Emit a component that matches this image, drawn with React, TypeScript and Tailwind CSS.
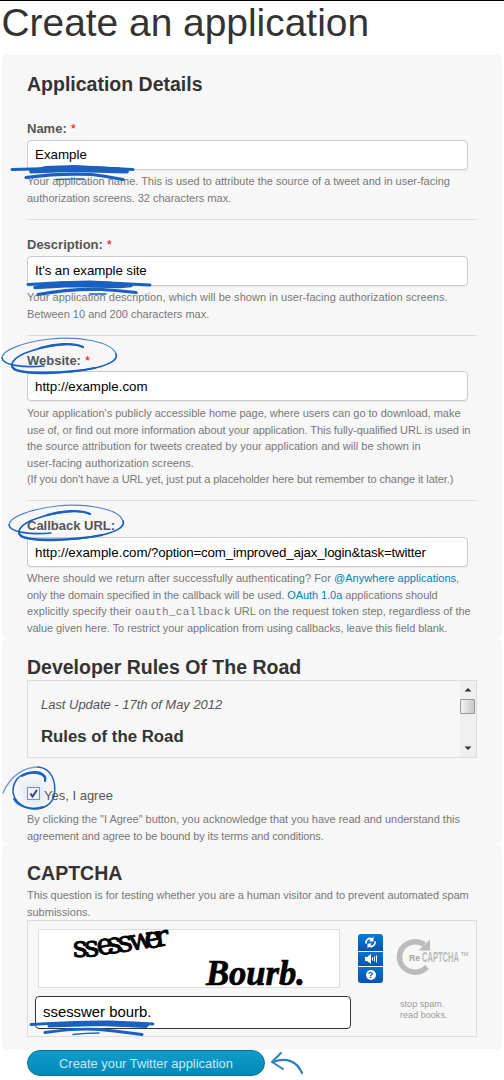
import React from "react";

const HELP = "text-[11px] leading-[16.5px] text-[#777] whitespace-nowrap";

function Line({ className = "", children }: { className?: string; children: React.ReactNode }) {
  return <div className={`h-[16.5px] ${className}`}>{children}</div>;
}

function Field({
  label,
  required,
  value,
  labelLeading = "leading-[20px]",
  valuePad = "pb-px",
  helpGap = "mt-[3px]",
  children,
}: {
  label: string;
  required?: boolean;
  value: React.ReactNode;
  labelLeading?: string;
  valuePad?: string;
  helpGap?: string;
  children: React.ReactNode;
}) {
  return (
    <div>
      <label className={`block h-[21px] text-[13px] font-bold ${labelLeading} text-[#555]`}>
        {label}
        {required && <span className="ml-1 font-normal text-[#f00]">*</span>}
      </label>
      <div
        className={`flex h-[30px] w-[441px] items-center rounded-[4px] border border-[#ccc] bg-white ${valuePad} pl-[7px] text-[13.33px] text-black shadow-[0_1px_1px_rgba(0,0,0,0.06)]`}
      >
        {value}
      </div>
      <div className={`${helpGap} ${HELP}`}>{children}</div>
    </div>
  );
}

function Ink() {
  return (
    <svg
      className="pointer-events-none absolute left-0 top-[-1px]"
      width="504"
      height="1080"
      viewBox="0 0 504 1080"
      fill="none"
      stroke="#1a60c0"
      strokeLinecap="round"
      strokeLinejoin="round"
    >
      <path d="M12 169.500Q50 168.500 90 167.500Q112 168.500 133 169.500" strokeWidth="3" />
      <path d="M31 171.500L45 168L75 167L120 169.500L127 171.500L70 170Z" fill="#1a60c0" strokeWidth="3.800" />
      <path d="M26 177.500Q60 173 92 174.500Q108 176.500 123 179.500" strokeWidth="3.200" />
      <path d="M56 179.500Q68 178.500 84 179" strokeWidth="1.300" />

      <path d="M28 284.500Q60 282 90 282Q122 283.500 150 285" strokeWidth="3" />
      <path d="M35 287.500L60 283.500L105 283L131 285.500L120 286.500L70 285.500Z" fill="#1a60c0" strokeWidth="3.400" />
      <path d="M38 294.500Q70 288.500 102 289.500Q118 290.500 136 292.500" strokeWidth="3.200" />
      <path d="M90 294H106" strokeWidth="1.300" />

      <g id="ring">
        <path d="M83 347C72 342 48 345 31 351C12 357 8 366 15 370C30 376 70 373 95 368C112 364 118 359 116 354" strokeWidth="1.700" />
        <path d="M116 354C112 341 76 336 50 339C24 342 2 350 2 358" strokeWidth="1.200" strokeOpacity="0.75" />
        <path d="M2 358C3 365 22 368 44 366" strokeWidth="1.600" />
        <path d="M83 347C72 342 54 344 40 348M12 366C14 376 70 373 95 368" strokeWidth="2.100" />
      </g>
      <use href="#ring" x="7" y="167" />

      <path d="M3 793C10 776 24 767 38 767" strokeWidth="1.400" strokeOpacity="0.6" />
      <path d="M38 767C51 768 57 781 54 796C50 809 36 811 25 807C12 801 10 789 17 779C23 772 38 769 44 775C46 777 46 779 45 781" strokeWidth="1.500" />
      <path d="M22 776C32 770 47 773 45 781M14 799C20 809 36 810 43 807" strokeWidth="2" />

      <path d="M31 1024.500Q80 1021.500 110 1022Q135 1023 153 1024" strokeWidth="2.800" />
      <path d="M49 1026L80 1022.500L148 1024.500L146 1026.500L100 1024.500Z" fill="#1a60c0" strokeWidth="3" />
      <path d="M45 1032.500Q75 1028 100 1029.500Q120 1031.500 142 1034.500" strokeWidth="3" />
      <path d="M73 1034.500Q86 1033 99 1033" strokeWidth="1.400" />

      <g stroke="#2f80b8">
        <path d="M281 1053L272 1062L283 1069" strokeWidth="2" />
        <path d="M273 1062C286 1057 297 1061 302 1073" strokeWidth="2.200" />
      </g>
    </svg>
  );
}

export default function App() {
  return (
    <div className="relative h-[1080px] w-[504px] overflow-hidden border-t border-black bg-white font-['Liberation_Sans',Arial,sans-serif]">
      <h1 className="h-[53px] pl-[1.5px] text-[38.9px] leading-[44px] text-[#333]">Create an application</h1>

      <section className="mx-[2px] h-[584px] rounded-[5px] bg-[#f7f7f7] pl-[25px] pt-[18px]">
        <h2 className="h-[47px] text-[19.5px] font-bold leading-[24px] text-[#333]">Application Details</h2>
        <div className="h-[101px] w-[450px] border-b border-[#ddd]">
          <Field label="Name:" required value="Example">
            <Line className="tracking-[-0.01px]">
              Your application name. This is used to attribute the source of a tweet and in user-facing
            </Line>
            <Line>authorization screens. 32 characters max.</Line>
          </Field>
        </div>
        <div className="h-[116px] w-[450px] border-b border-[#ddd] pt-[15px]">
          <Field label="Description:" required value={<span className="tracking-[-0.1px]">It's an example site</span>}>
            <Line className="tracking-[0.047px]">
              Your application description, which will be shown in user-facing authorization screens.
            </Line>
            <Line>Between 10 and 200 characters max.</Line>
          </Field>
        </div>
        <div className="h-[165px] w-[450px] border-b border-[#ddd] pt-[14px]">
          <Field
            label="Website:"
            required
            value="http://example.com"
            labelLeading="leading-[22px]"
            valuePad="pt-px"
            helpGap="mt-[4px]"
          >
            <Line className="tracking-[-0.02px]">
              Your application's publicly accessible home page, where users can go to download, make
            </Line>
            <Line className="tracking-[-0.063px]">
              use of, or find out more information about your application. This fully-qualified URL is used in
            </Line>
            <Line className="tracking-[0.05px]">
              the source attribution for tweets created by your application and will be shown in
            </Line>
            <Line className="tracking-[0.05px]">user-facing authorization screens.</Line>
            <Line className="tracking-[-0.078px]">
              (If you don't have a URL yet, just put a placeholder here but remember to change it later.)
            </Line>
          </Field>
        </div>
        <div className="pt-[15px]">
          <Field
            label="Callback URL:"
            valuePad="pt-px"
            value={
              <>
                <span>http://example.com</span>
                <span className="tracking-[-0.19px]">/?option=com_improved_ajax_login&amp;task=twitter</span>
              </>
            }
          >
            <Line className="tracking-[0.04px]">
              Where should we return after successfully authenticating? For{" "}
              <a className="text-[#0084b4]">@Anywhere applications</a>,
            </Line>
            <Line className="tracking-[-0.06px]">
              only the domain specified in the callback will be used. <a className="text-[#0084b4]">OAuth 1.0a</a>{" "}
              applications should
            </Line>
            <Line>
              <span className="tracking-[0.05px]">explicitly specify their </span>
              <code className="font-['Liberation_Mono',monospace] leading-none tracking-[0.27px]">oauth_callback</code>{" "}
              URL on the request token step, regardless of the
            </Line>
            <Line className="tracking-[-0.055px]">
              value given here. To restrict your application from using callbacks, leave this field blank.
            </Line>
          </Field>
        </div>
      </section>

      <section className="mx-[2px] h-[207px] rounded-[5px] bg-[#f7f7f7] pl-[25px] pt-[17px]">
        <h2 className="h-[25px] text-[19.5px] font-bold leading-[24px] text-[#333]">Developer Rules Of The Road</h2>
        <div className="flex h-[78px] w-[450px] justify-between border border-[#ddd]">
          <div className="pl-[13px] pt-[15px] text-[#333]">
            <p className="h-[30px] text-[13px] italic leading-[18px] tracking-[-0.03px] text-[#555]">
              Last Update - 17th of May 2012
            </p>
            <p className="text-[16.8px] font-bold leading-[21px]">Rules of the Road</p>
          </div>
          <div className="flex w-4 flex-col items-center bg-[#efefef]">
            <svg className="mt-[6px]" width="8" height="5" viewBox="0 0 8 5">
              <path d="M0.500 4.500L4 1L7.500 4.500Z" fill="#333" />
            </svg>
            <div className="mr-px mt-[7px] h-[15px] w-[15px] rounded-[1px] border border-[#999] bg-linear-to-r from-[#f3f3f3] to-[#c8c8c8]" />
            <svg className="mt-[32px]" width="8" height="5" viewBox="0 0 8 5">
              <path d="M0.500 0.500L4 4L7.500 0.500Z" fill="#333" />
            </svg>
          </div>
        </div>
        <div className="mt-[28px] flex h-[25px] items-start">
          <div className="mt-px h-[13px] w-[13px] border border-[#8e8f8f] bg-[#eef1f5] p-px shadow-[0_0_8px_3px_rgba(190,220,255,0.6)]">
            <svg width="9" height="9" viewBox="0 0 9 9">
              <path d="M1.500 4.500L3.500 7.500L8 1" fill="none" stroke="#35458c" strokeWidth="2" />
            </svg>
          </div>
          <span className="ml-1 text-[13px] leading-[20px] text-[#555]">Yes, I agree</span>
        </div>
        <div className={HELP}>
          <Line className="tracking-[-0.02px]">
            By clicking the "I Agree" button, you acknowledge that you have read and understand this
          </Line>
          <Line className="tracking-[-0.1px]">agreement and agree to be bound by its terms and conditions.</Line>
        </div>
      </section>

      <section className="mx-[2px] h-[205px] rounded-[5px] bg-[#f7f7f7] pl-[25px] pt-[16px]">
        <h2 className="h-[26px] text-[19.5px] font-bold leading-[24px] text-[#333]">CAPTCHA</h2>
        <div className={`h-[33px] ${HELP}`}>
          <Line className="tracking-[-0.045px]">
            This question is for testing whether you are a human visitor and to prevent automated spam
          </Line>
          <Line>submissions.</Line>
        </div>
        <div className="flex h-[117px] w-[450px] border border-[#ddd]">
          <div className="w-[324px] pl-[7px] pt-[8px]">
            <div className="ml-[3px] h-[59px] w-[302px] border border-[#ddd] bg-white">
              <svg className="overflow-visible" width="300" height="57" viewBox="39 930 300 57">
                <text
                  x="73 85 98 108 119 130 146 156"
                  y="957 957 955.500 954 952.500 951 949 947"
                  rotate="-2 -5 -10 -8 -8 -10 -10 -8"
                  fontSize="29"
                  fontFamily="DejaVu Serif, serif"
                  stroke="#000"
                  strokeWidth="0.900"
                >
                  ssesswer
                </text>
                <text
                  x="206"
                  y="985"
                  stroke="#000"
                  strokeWidth="0.700"
                  fontSize="36"
                  fontFamily="Liberation Serif, serif"
                  fontStyle="italic"
                  fontWeight="bold"
                  textLength="99"
                  lengthAdjust="spacingAndGlyphs"
                >
                  Bourb.
                </text>
              </svg>
            </div>
            <div className="mt-[8px] flex h-[33px] w-[316px] items-center rounded-[4px] border border-[#333] bg-white pl-[7px] text-[14.9px] text-black">
              ssesswer bourb.
            </div>
          </div>
          <div className="ml-[6px] mt-[13px] flex h-[49px] w-[25px] flex-col gap-px overflow-hidden rounded-[3px]">
            <div className="flex h-[17px] items-center justify-center bg-linear-to-b from-[#0b7ccb] to-[#0752b5]">
              <svg width="13" height="13" viewBox="0 0 13 13" fill="none" stroke="#fff" strokeWidth="1.800">
                <path d="M2 7.500C1.500 4 4.500 1.500 8 3M11 5.500C11.500 9 8.500 11.500 5 10" />
                <path d="M9.500 0.500V5.500H5ZM3.500 12.500V7.500H8Z" fill="#fff" stroke="none" />
              </svg>
            </div>
            <div className="flex h-[14px] items-center justify-center bg-linear-to-b from-[#0b72c6] to-[#0752b5]">
              <svg width="14" height="12" viewBox="0 0 14 12" fill="none" stroke="#fff">
                <path d="M1 4H3L7 1V11L3 8H1Z" fill="#fff" stroke="none" />
                <path d="M8.500 4.500V7.500M10.500 3.500V8.500M12.500 2.500V9.500" />
              </svg>
            </div>
            <div className="flex h-[16px] items-center justify-center bg-linear-to-b from-[#0b72c6] to-[#0752b5]">
              <span className="flex h-[10px] w-[10px] items-center justify-center rounded-full bg-white text-[9px] font-bold leading-none text-[#0752b5]">
                ?
              </span>
            </div>
          </div>
          <div className="ml-[13px] pt-[16px]">
            <svg className="overflow-visible" width="74" height="42" viewBox="396 937 74 42">
              <path
                d="M424.500 944.500C413 937.500 399.500 945 399.500 957C399.500 970.500 416 977.500 427 967"
                fill="none"
                stroke="#bbb"
                strokeWidth="5.500"
              />
              <path d="M430 939.500V950.500H418.500Z" fill="#bbb" />
              <text
                x="409"
                y="960.500"
                fontSize="9"
                fontWeight="bold"
                fill="#a2a2a2"
                textLength="11"
                lengthAdjust="spacingAndGlyphs"
              >
                Re
              </text>
              <text
                x="422"
                y="962"
                fontSize="14.500"
                fontWeight="bold"
                fill="#bbb"
                textLength="37"
                lengthAdjust="spacingAndGlyphs"
              >
                CAPTCHA
              </text>
              <text x="461" y="956" fontSize="5" fill="#999">
                TM
              </text>
            </svg>
            <div className="ml-1 mt-[20px] text-[9px] leading-[11px] tracking-[0.04px] text-[#999]">
              stop spam.
              <br />
              read books.
            </div>
          </div>
        </div>
      </section>

      <button className="ml-[27px] block h-[26px] w-[238px] rounded-full border border-[#0a6f94] bg-linear-to-b from-[#0f9dcb] to-[#0089b8] text-[12.9px] leading-[23px] text-[#c8eaf6]">
        Create your Twitter application
      </button>

      <Ink />
    </div>
  );
}
